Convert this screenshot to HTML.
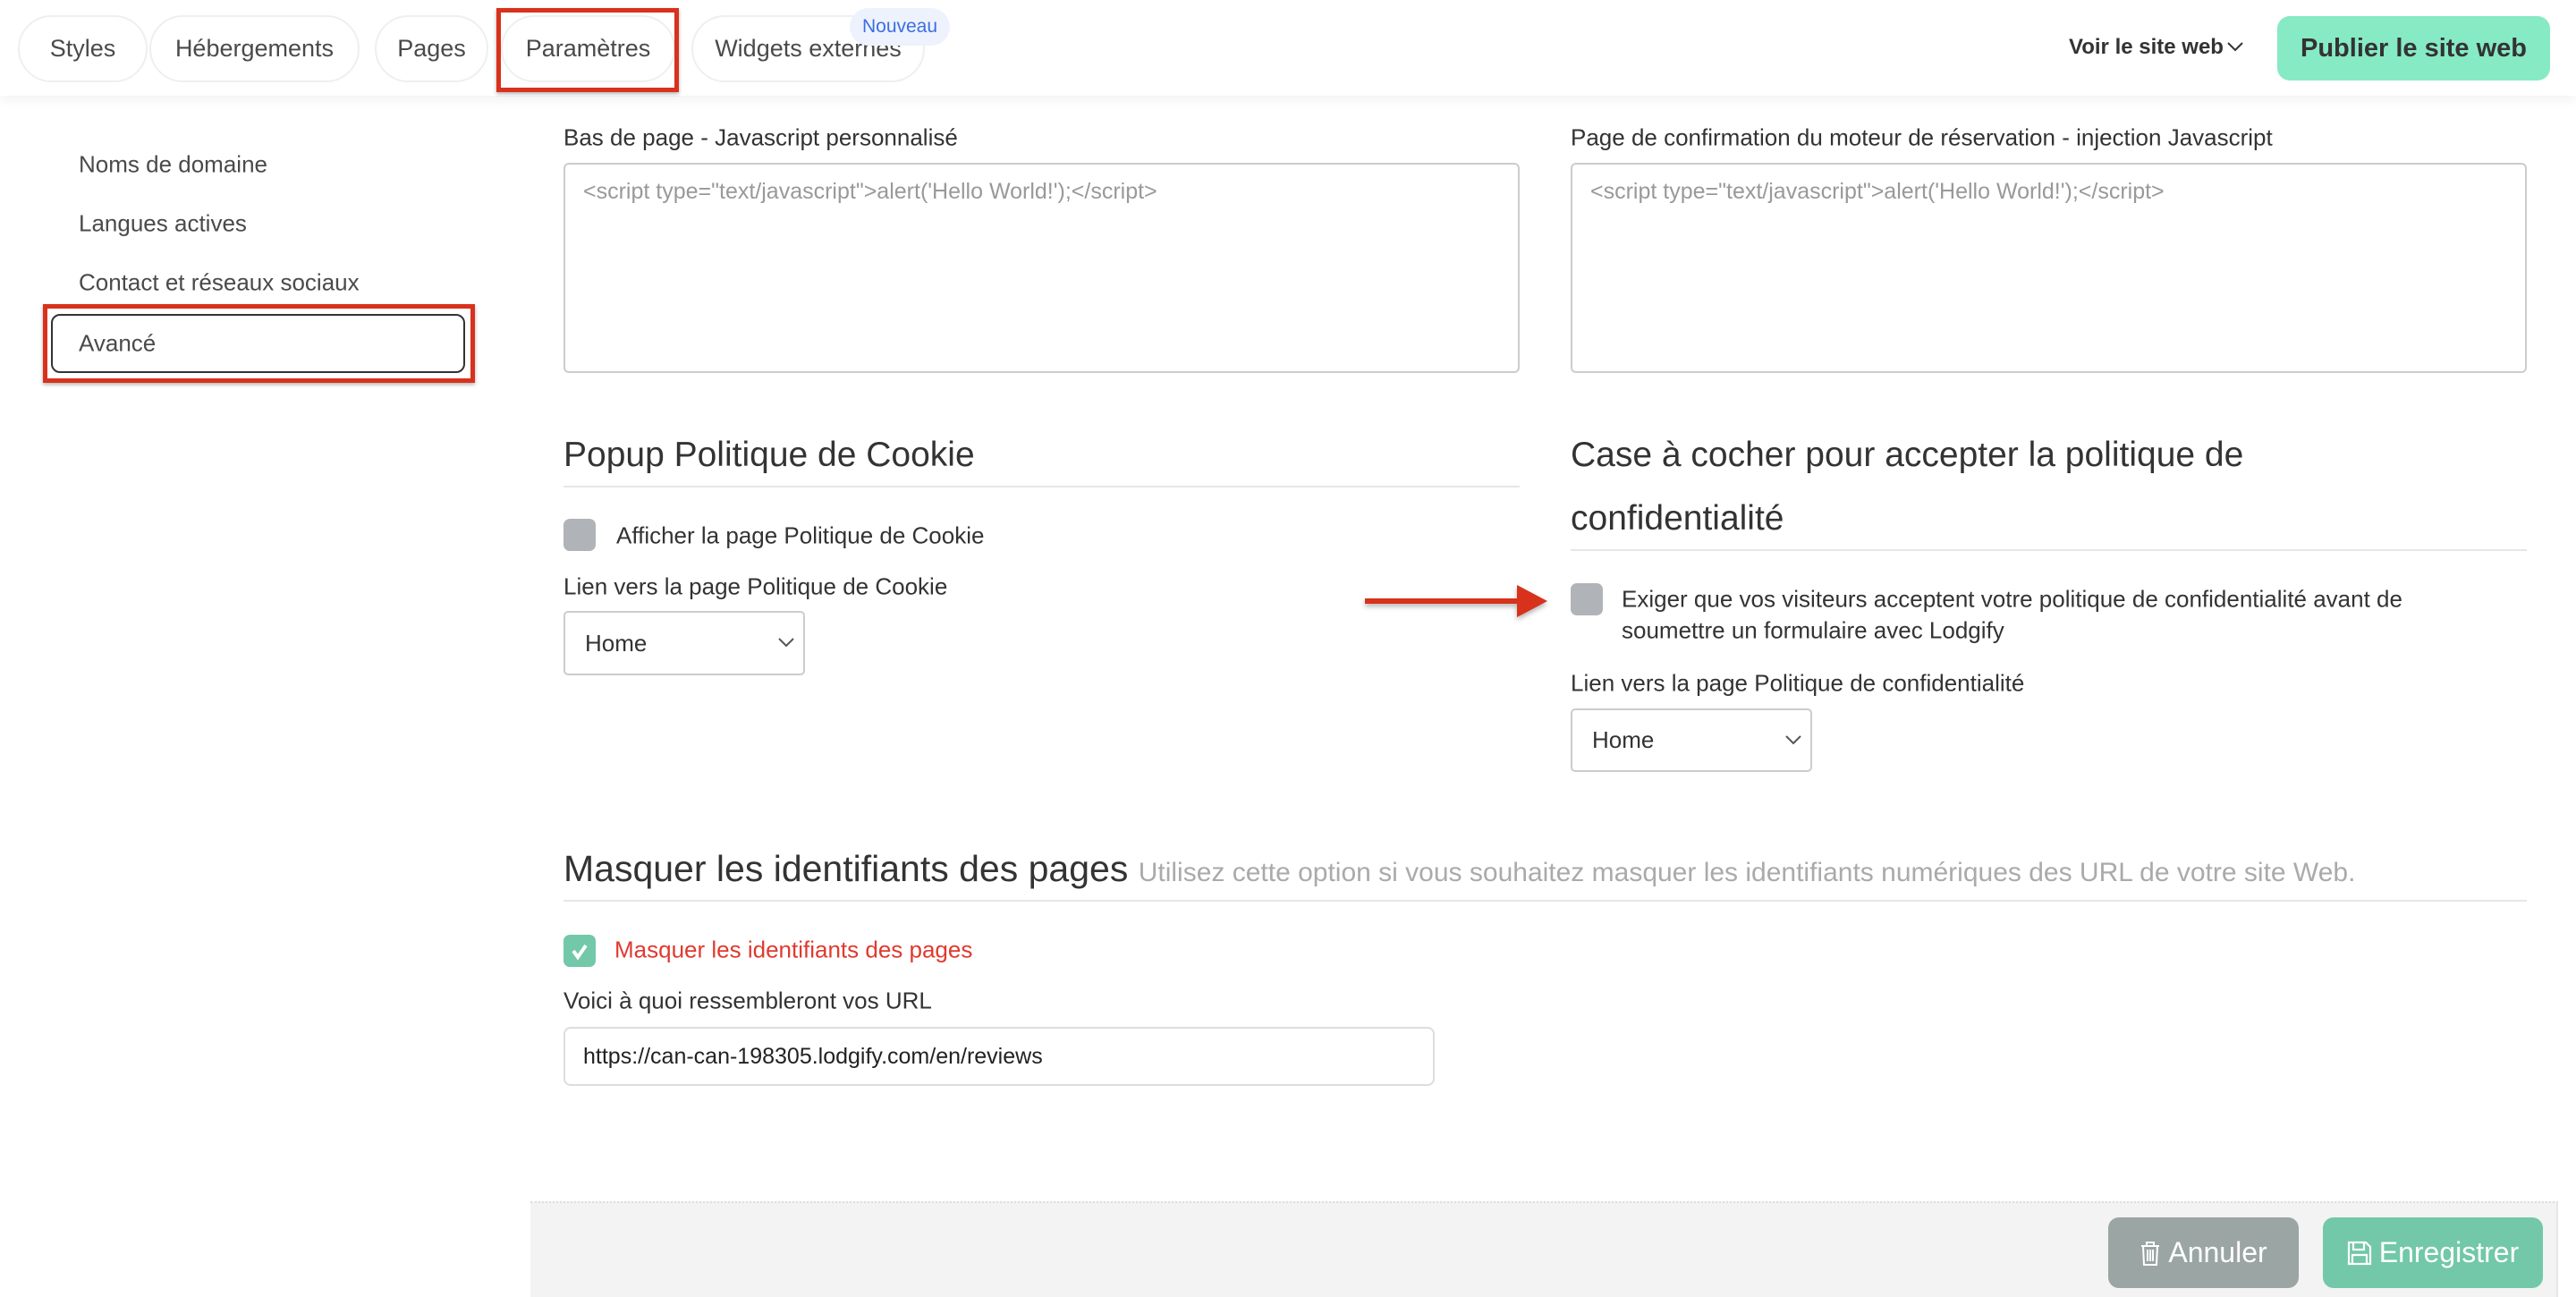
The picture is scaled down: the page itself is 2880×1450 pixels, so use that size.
<!DOCTYPE html>
<html><head><meta charset="utf-8"><style>
*{box-sizing:border-box;margin:0;padding:0}
body{width:2880px;height:1450px;background:#fff;font-family:"Liberation Sans",sans-serif;color:#3a3a3a;position:relative;overflow:hidden}
.a{position:absolute;white-space:nowrap}
.top{position:absolute;left:0;top:0;width:2880px;height:107px;background:#fff;box-shadow:0 4px 14px rgba(0,0,0,.06);z-index:2}
.pill{position:absolute;top:17px;height:75px;border:2px solid #efefef;border-radius:38px;font-size:27px;color:#4a4a4a;display:flex;align-items:center;justify-content:center}
.red{position:absolute;border:5px solid #d8321c;box-shadow:0 2px 4px rgba(0,0,0,.3)}
.side{position:absolute;left:88px;font-size:26px;color:#4a4a4a;transform:translateY(-50%)}
.lbl{position:absolute;font-size:26px;color:#333;transform:translateY(-50%)}
.ta{position:absolute;border:2px solid #ccc;border-radius:6px;background:#fff}
.ph{position:absolute;left:20px;top:16px;font-size:25px;color:#999}
.h2{position:absolute;font-size:39px;color:#333;transform:translateY(-50%)}
.hr{position:absolute;height:2px;background:#e6e6e6}
.cb{position:absolute;width:36px;height:36px;border-radius:7px;background:#b0b4b8}
.sel{position:absolute;border:2px solid #ccc;border-radius:5px;background:#fff;font-size:26px;color:#333;padding-left:22px;display:flex;align-items:center}
.sel svg{position:absolute;right:10px;top:50%;margin-top:-6px}
.btn{position:absolute;border-radius:12px;color:#fff;font-size:32px;display:flex;align-items:center;justify-content:center;gap:8px}
</style></head><body>
<div class="top">
 <div class="pill" style="left:20px;width:145px">Styles</div>
 <div class="pill" style="left:167px;width:235px">Hébergements</div>
 <div class="pill" style="left:419px;width:127px">Pages</div>
 <div class="pill" style="left:560px;width:195px">Paramètres</div>
 <div class="pill" style="left:773px;width:261px">Widgets externes</div>
 <div class="a" style="left:950px;top:9px;width:112px;height:42px;border-radius:21px;background:#eef2fd;color:#3b6fe0;font-size:21px;display:flex;align-items:center;justify-content:center">Nouveau</div>
 <div class="red" style="left:555px;top:9px;width:204px;height:94px"></div>
 <div class="a" style="left:2313px;top:39px;font-size:24px;font-weight:bold;color:#333">Voir le site web</div>
 <svg class="a" style="left:2490px;top:47px" width="18" height="11" viewBox="0 0 18 11"><path d="M1 1l8 8 8-8" fill="none" stroke="#333" stroke-width="2"/></svg>
 <div class="a" style="left:2546px;top:18px;width:305px;height:72px;border-radius:14px;background:#86eac5;font-size:29px;font-weight:bold;color:#333;display:flex;align-items:center;justify-content:center">Publier le site web</div>
</div>

<div class="side" style="top:184px">Noms de domaine</div>
<div class="side" style="top:250px">Langues actives</div>
<div class="side" style="top:316px">Contact et réseaux sociaux</div>
<div class="a" style="left:57px;top:351px;width:463px;height:66px;border:2px solid #333;border-radius:10px"></div>
<div class="side" style="top:384px">Avancé</div>
<div class="red" style="left:48px;top:340px;width:483px;height:88px"></div>

<div class="lbl" style="left:630px;top:154px">Bas de page - Javascript personnalisé</div>
<div class="ta" style="left:630px;top:182px;width:1069px;height:235px"><div class="ph">&lt;script type="text/javascript"&gt;alert('Hello World!');&lt;/script&gt;</div></div>
<div class="lbl" style="left:1756px;top:154px">Page de confirmation du moteur de réservation - injection Javascript</div>
<div class="ta" style="left:1756px;top:182px;width:1069px;height:235px"><div class="ph">&lt;script type="text/javascript"&gt;alert('Hello World!');&lt;/script&gt;</div></div>

<div class="h2" style="left:630px;top:509px">Popup Politique de Cookie</div>
<div class="hr" style="left:630px;top:543px;width:1069px"></div>
<div class="cb" style="left:630px;top:580px"></div>
<div class="lbl" style="left:689px;top:599px">Afficher la page Politique de Cookie</div>
<div class="lbl" style="left:630px;top:656px">Lien vers la page Politique de Cookie</div>
<div class="sel" style="left:630px;top:683px;width:270px;height:72px">Home<svg width="18" height="11" viewBox="0 0 18 11"><path d="M1 1l8 8 8-8" fill="none" stroke="#555" stroke-width="2"/></svg></div>

<div class="h2" style="left:1756px;top:509px">Case à cocher pour accepter la politique de</div>
<div class="h2" style="left:1756px;top:580px">confidentialité</div>
<div class="hr" style="left:1756px;top:614px;width:1069px"></div>
<div class="cb" style="left:1756px;top:652px"></div>
<div class="lbl" style="left:1813px;top:670px">Exiger que vos visiteurs acceptent votre politique de confidentialité avant de</div>
<div class="lbl" style="left:1813px;top:705px">soumettre un formulaire avec Lodgify</div>
<div class="lbl" style="left:1756px;top:764px">Lien vers la page Politique de confidentialité</div>
<div class="sel" style="left:1756px;top:792px;width:270px;height:71px">Home<svg width="18" height="11" viewBox="0 0 18 11"><path d="M1 1l8 8 8-8" fill="none" stroke="#555" stroke-width="2"/></svg></div>
<svg class="a" style="left:1524px;top:648px;filter:drop-shadow(0 3px 3px rgba(0,0,0,.3))" width="208" height="48" viewBox="0 0 208 48"><path d="M2 24H175" stroke="#d8321c" stroke-width="6"/><path d="M172 6L206 24L172 42Z" fill="#d8321c"/></svg>

<div class="a" style="left:630px;top:948px;font-size:41px;color:#333">Masquer les identifiants des pages <span style="font-size:30px;color:#aaa">Utilisez cette option si vous souhaitez masquer les identifiants numériques des URL de votre site Web.</span></div>
<div class="hr" style="left:630px;top:1006px;width:2195px"></div>
<div class="cb" style="left:630px;top:1045px;background:#72c8a8"><svg width="36" height="36" viewBox="0 0 36 36"><path d="M11 18l5 7 9-13" fill="none" stroke="#fff" stroke-width="4"/></svg></div>
<div class="lbl" style="left:687px;top:1062px;color:#e03a2f">Masquer les identifiants des pages</div>
<div class="lbl" style="left:630px;top:1119px">Voici à quoi ressembleront vos URL</div>
<div class="a" style="left:630px;top:1148px;width:974px;height:66px;border:2px solid #ddd;border-radius:8px;font-size:25px;color:#222;padding-left:20px;display:flex;align-items:center">https://can-can-198305.lodgify.com/en/reviews</div>

<div class="a" style="left:593px;top:1343px;width:2267px;height:107px;background:#f3f3f3;border-top:2px dotted #ddd;border-right:2px solid #e6e6e6"></div>
<div class="btn" style="left:2357px;top:1361px;width:213px;height:79px;background:#9aa5a4"><svg width="24" height="30" viewBox="0 0 24 30"><path d="M2 7h20M8 7V3h8v4M4 7l1 21h14l1-21M9 11v13M12 11v13M15 11v13" fill="none" stroke="#fff" stroke-width="2"/></svg>Annuler</div>
<div class="btn" style="left:2597px;top:1361px;width:246px;height:79px;background:#72c8a8"><svg width="28" height="28" viewBox="0 0 28 28"><path d="M2 2h19l5 5v19H2z M7 2v8h12V2 M6 26V16h16v10" fill="none" stroke="#fff" stroke-width="2.2"/></svg>Enregistrer</div>
</body></html>
